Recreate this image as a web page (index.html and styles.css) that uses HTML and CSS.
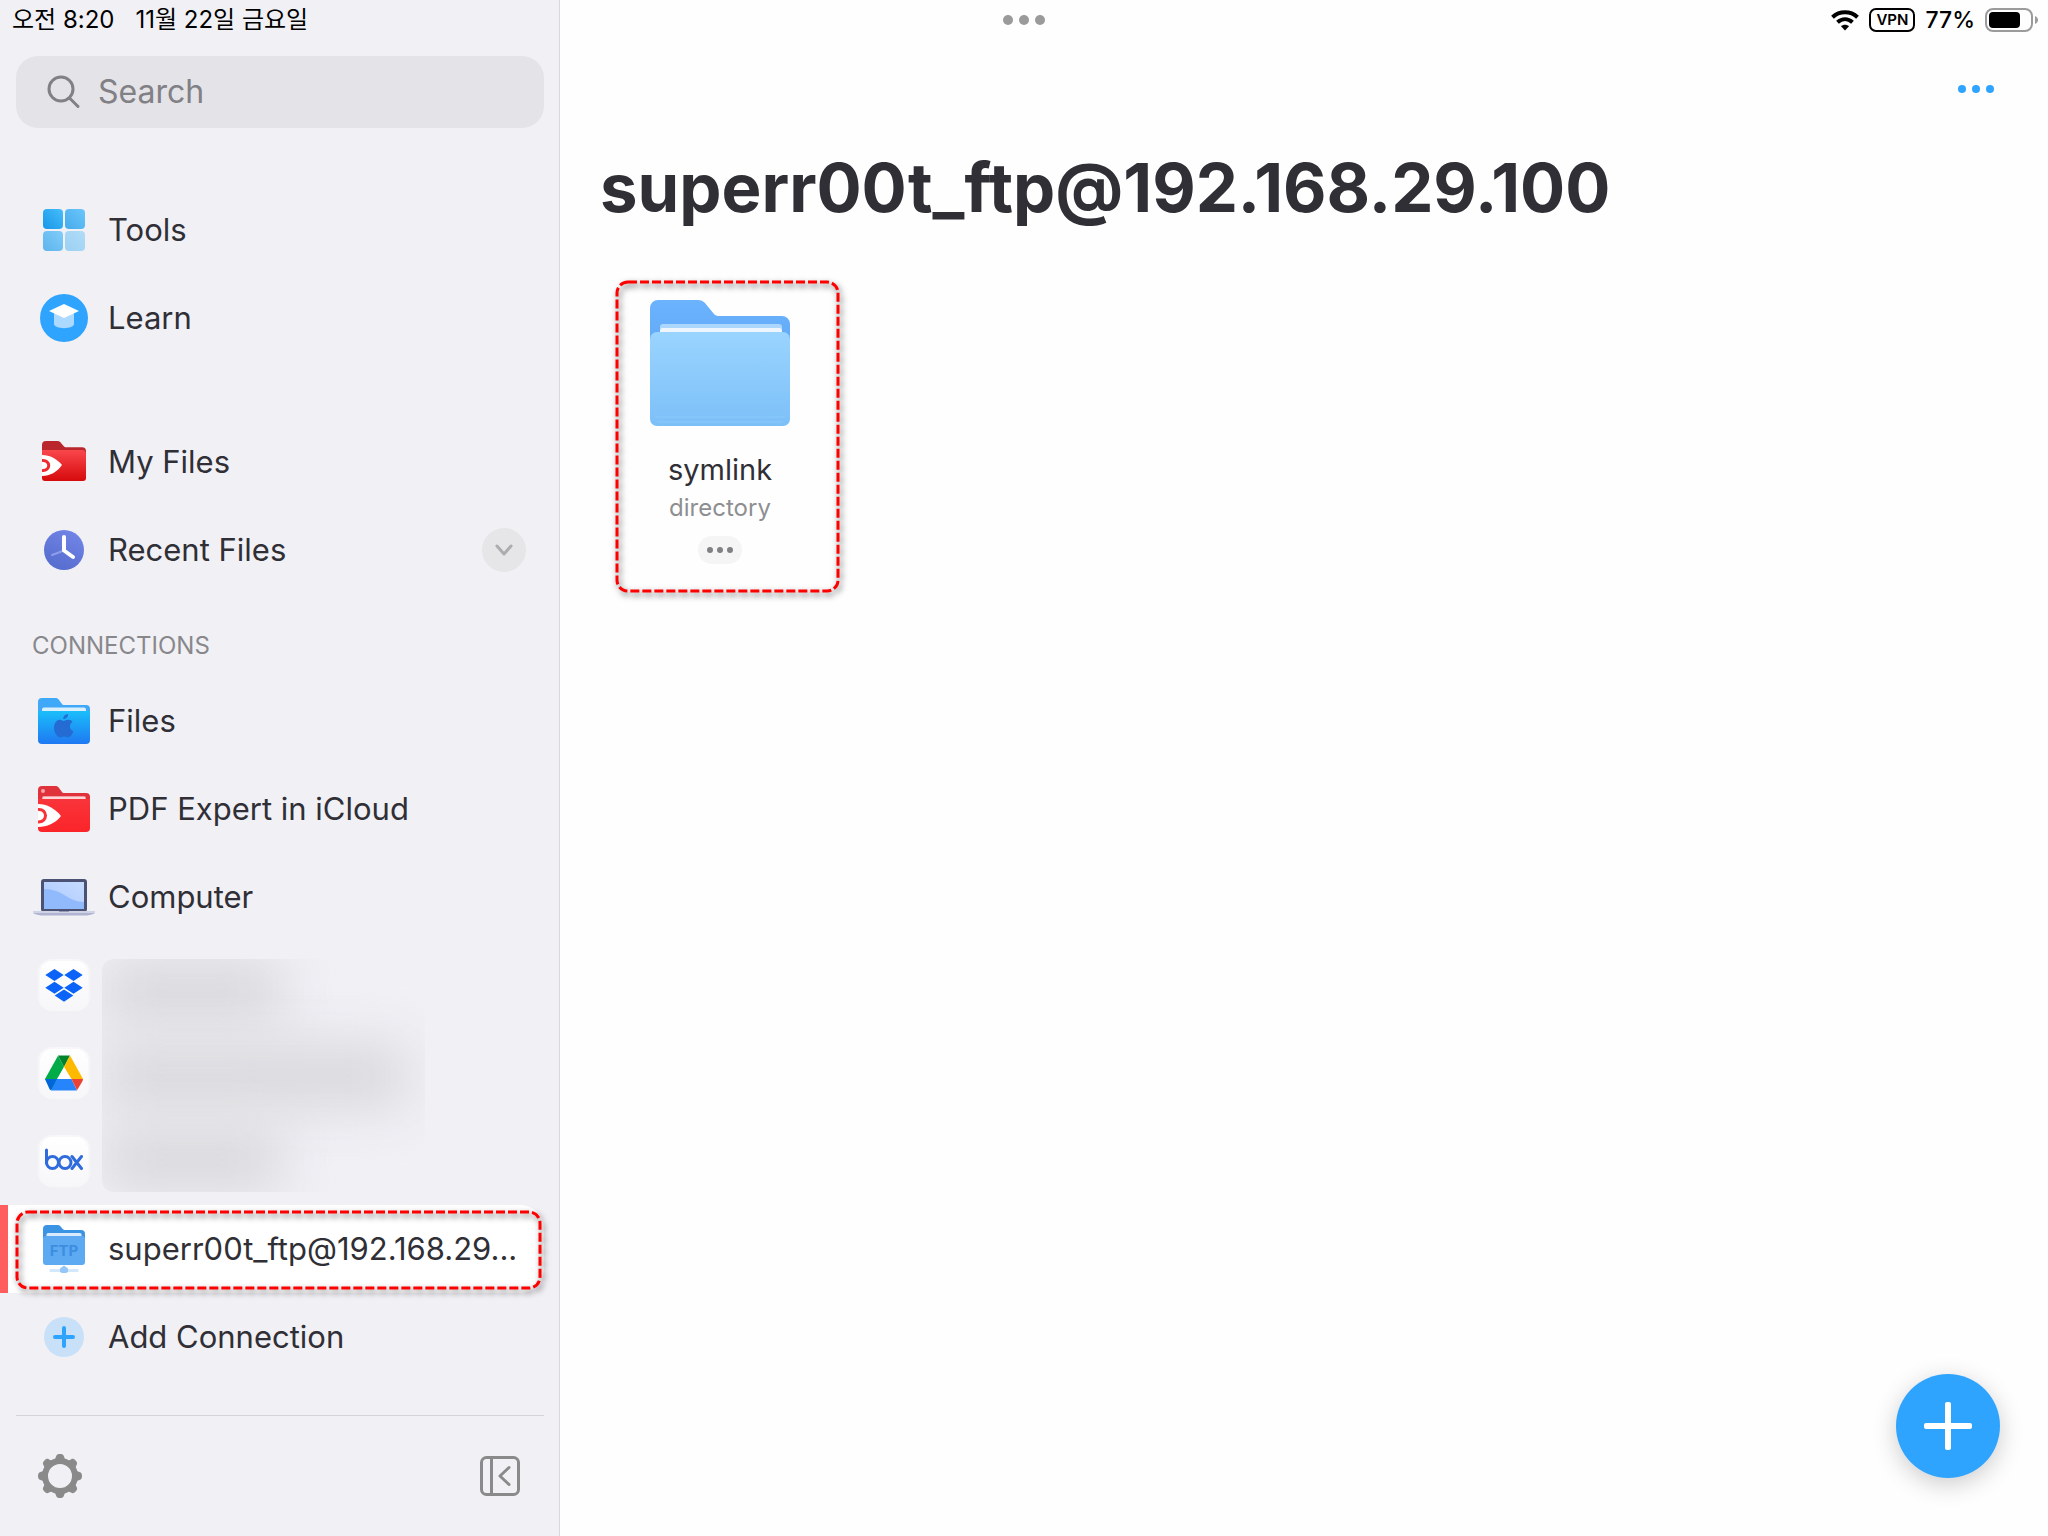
FILE: index.html
```html
<!DOCTYPE html>
<html lang="ko">
<head>
<meta charset="utf-8">
<meta name="viewport" content="width=device-width, initial-scale=1">
<title>superr00t_ftp@192.168.29.100</title>
<link rel="stylesheet" href="styles.css">
</head>
<body>
<div class="app">
  <aside class="sidebar">
    <div class="status status-left"><span>오전 8:20</span><span>11월 22일 금요일</span></div>
    <label class="search">
      <svg width="34" height="34" viewBox="0 0 34 34" fill="none" stroke="#808085" stroke-width="3" stroke-linecap="round"><circle cx="14" cy="14" r="12"/><path d="M22.500 23L31 31.500"/></svg>
      <input type="search" placeholder="Search" aria-label="Search">
    </label>

    <nav class="nav">
      <ul class="group">
        <li><a class="row" href="#tools"><span class="icon">
          <svg width="42" height="42" viewBox="0 0 42 42"><defs><linearGradient id="t1" x1="1" y1="0" x2="0" y2="1"><stop stop-color="#48bdfb"/><stop offset="1" stop-color="#1598e8"/></linearGradient><linearGradient id="t2" x1="1" y1="0" x2="0" y2="1"><stop stop-color="#6cc6fb"/><stop offset="1" stop-color="#45abeb"/></linearGradient><linearGradient id="t3" x1="1" y1="0" x2="0" y2="1"><stop stop-color="#80cdf9"/><stop offset="1" stop-color="#5db4ec"/></linearGradient><linearGradient id="t4" x1="1" y1="0" x2="0" y2="1"><stop stop-color="#b0dcf8"/><stop offset="1" stop-color="#9bd0f2"/></linearGradient></defs>
          <rect width="20" height="20" rx="4" fill="url(#t1)"/><rect x="22" width="20" height="20" rx="4" fill="url(#t2)"/><rect y="22" width="20" height="20" rx="4" fill="url(#t3)"/><rect x="22" y="22" width="20" height="20" rx="4" fill="url(#t4)"/></svg>
        </span><span class="label">Tools</span></a></li>
        <li><a class="row" href="#learn"><span class="icon">
          <svg width="48" height="48" viewBox="0 0 48 48"><circle cx="24" cy="24" r="24" fill="#2fa4ff"/><path d="M14 18v12c0 5.500 20 5.500 20 0V18z" fill="#acd9ff"/><path d="M24 10l15 7-15 7-15-7z" fill="#fff"/></svg>
        </span><span class="label">Learn</span></a></li>
      </ul>

      <ul class="group">
        <li><a class="row" href="#my-files"><span class="icon">
          <svg width="44" height="42" viewBox="0 0 44 42"><defs><linearGradient id="m1" x2="0" y2="1"><stop stop-color="#f9474c"/><stop offset="1" stop-color="#d60a0c"/></linearGradient></defs><path d="M0 12V4a4 4 0 0 1 4-4h11c2 0 3 .5 4 2l3 3.500c.5.5 1 .7 2 .7h16a4 4 0 0 1 4 4V14z" fill="#b9262b"/><path d="M0 9h40a4 4 0 0 1 4 4v24a3 3 0 0 1-3 3H3a3 3 0 0 1-3-3z" fill="url(#m1)"/><path d="M0 14c8 0 15 4 20 10-5 7-12 11-20 11z" fill="#fff"/><path d="M0 19.500c9-1 9 11 0 10" fill="none" stroke="#ee2a2e" stroke-width="3"/></svg>
        </span><span class="label">My Files</span></a></li>
        <li class="row-line"><a class="row" href="#recent"><span class="icon">
          <svg width="40" height="40" viewBox="0 0 40 40"><defs><linearGradient id="c1" x1="1" y1="0" x2=".5" y2="1"><stop stop-color="#7488e8"/><stop offset="1" stop-color="#586ed0"/></linearGradient></defs><circle cx="20" cy="20" r="20" fill="url(#c1)"/><path d="M20 20.500L8 25" stroke="#8d9de8" stroke-width="2" stroke-linecap="round"/><path d="M20 7v13.500l9 6.500" fill="none" stroke="#fff" stroke-width="4" stroke-linecap="round" stroke-linejoin="round"/></svg>
        </span><span class="label">Recent Files</span></a>
        <button class="expand" type="button" aria-label="Expand recent files"><svg width="18" height="12" viewBox="0 0 18 12" fill="none" stroke="#adadb0" stroke-width="3" stroke-linecap="round" stroke-linejoin="round"><path d="M2 2l7 8 7-8"/></svg></button></li>
      </ul>

      <h2 class="heading">CONNECTIONS</h2>
      <ul class="group">
        <li><a class="row" href="#files"><span class="icon">
          <svg width="52" height="46" viewBox="0 1 52 46"><defs><linearGradient id="f1" x2="0" y2="1"><stop stop-color="#1abefa"/><stop offset="1" stop-color="#1f78f2"/></linearGradient></defs><path d="M0 16V5a4 4 0 0 1 4-4h13c2 0 3 .5 4 2l3 4c.5.700 1 1 2 1h22a4 4 0 0 1 4 4v7z" fill="#3fa8f8"/><path d="M4 15v-2.500a2 2 0 0 1 2-2h40a2 2 0 0 1 2 2V15z" fill="#d9effd"/><path d="M0 14h52v29a4 4 0 0 1-4 4H4a4 4 0 0 1-4-4z" fill="url(#f1)"/><path transform="translate(16 17)" d="M9.500 7c1.500 0 2.500-1.200 5-1.200 1.700 0 3.100.8 4 2.200-4 2.600-3 7.600.8 9.200-.9 2.900-3 6.200-5.200 6.200-1.500 0-2.200-.9-4-.9s-2.600.9-4 .9C3.200 23.400 0 18.400 0 14 0 9 2.800 5.800 6 5.800c1.500 0 2.300 1.200 3.500 1.200zM9.300 5C9 2.400 11.500.2 14 0c.3 2.700-1.900 5-4.700 5z" fill="#246bd4"/></svg>
        </span><span class="label">Files</span></a></li>
        <li><a class="row" href="#icloud"><span class="icon">
          <svg width="52" height="46" viewBox="0 1 52 46"><defs><linearGradient id="p1" x2="0" y2="1"><stop stop-color="#f8343a"/><stop offset="1" stop-color="#fb2529"/></linearGradient></defs><path d="M0 16V5a4 4 0 0 1 4-4h13c2 0 3 .5 4 2l3 4c.5.700 1 1 2 1h22a4 4 0 0 1 4 4v7z" fill="#e0323a"/><path d="M4 15v-2a2 2 0 0 1 2-2h40a2 2 0 0 1 2 2v2z" fill="#f69a9d"/><path d="M5 12h42v3H5z" fill="#fff" fill-opacity=".6"/><circle cx="5" cy="6" r="2" fill="#f9a4a8"/><path d="M0 14h52v29a4 4 0 0 1-4 4H4a4 4 0 0 1-4-4z" fill="url(#p1)"/><path d="M0 19c9 0 17 4.500 23 12-6 7.500-14 11-23 11z" fill="#fff"/><path d="M0 24.500c10-1 10 13 0 12.500" fill="none" stroke="#f83237" stroke-width="3"/></svg>
        </span><span class="label">PDF Expert in iCloud</span></a></li>
        <li><a class="row" href="#computer"><span class="icon">
          <svg width="62" height="38" viewBox="0 0 62 38"><defs><linearGradient id="l1" x1="1" y1="0" x2="0" y2="1"><stop stop-color="#c7dbff"/><stop offset="1" stop-color="#a9c8ff"/></linearGradient></defs><rect x="8" y="1" width="46" height="33" rx="3" fill="#4b5274"/><rect x="11" y="4" width="40" height="27" fill="url(#l1)"/><path d="M11 11c19 0 24 13 40 13v7H11z" fill="#91bafd"/><path d="M0 33h62v2c-4 2-7 2-11 2H11c-4 0-7 0-11-2z" fill="#d0d3e6"/><path d="M0 35c4 2 7 2.500 11 2.500h40c4 0 7-.5 11-2.500z" fill="#b0b4d0"/><path d="M26 33h10v1H26z" fill="#9599b8"/></svg>
        </span><span class="label">Computer</span></a></li>
        <li class="masked">
          <ul class="group">
            <li><a class="row" href="#dropbox" aria-label="Dropbox"><span class="icon tile">
              <svg width="38" height="34" viewBox="0 0 38 34" fill="#0b63f8"><path d="M9.500 1l9.200 6-9.200 6L.3 7zM28.500 1l9.200 6-9.200 6-9.200-6zM9.500 13.700l9.200 6-9.200 6-9.200-6zM28.500 13.700l9.200 6-9.200 6-9.200-6zM19 21.500l9.300 6L19 33.700l-9.300-6.200z"/></svg>
            </span></a></li>
            <li><a class="row" href="#drive" aria-label="Google Drive"><span class="icon tile">
              <svg width="38" height="36" viewBox="0 0 38 36"><path d="M13 .8L19 12 7 35.500 0 24z" fill="#00ac47"/><path d="M13 .5h12L19 12z" fill="#00832d"/><path d="M25 .5L38 24H26.500L19 12z" fill="#ffba00"/><path d="M0 24h12L6 35.300C5 35 4.500 34 4 33z" fill="#0066da"/><path d="M12 24h14.500L32 35.500H6z" fill="#2684fc"/><path d="M26.500 24H38c0 1-.5 2-1 3l-5 8.300z" fill="#ea4335"/><path d="M19 12l7 12H12z" fill="#fff"/></svg>
            </span></a></li>
            <li><a class="row" href="#box" aria-label="Box"><span class="icon tile">
              <svg width="38" height="26" viewBox="0 1 38 26" fill="none" stroke="#2f6bdc" stroke-width="3" stroke-linecap="round"><path d="M1.500 3v13"/><circle cx="7.500" cy="15.500" r="6"/><circle cx="20" cy="15.500" r="6"/><path d="M27 9.500l9.500 12M36.500 9.500l-9.500 12"/></svg>
            </span></a></li>
          </ul>
          <div class="mask" aria-hidden="true"><span class="smudge short"></span><span class="smudge"></span><span class="smudge short"></span></div>
        </li>
        <li class="selected"><a class="row" href="#ftp" aria-current="page"><span class="icon">
          <svg width="42" height="48" viewBox="0 0 42 48"><path d="M0 16V4a4 4 0 0 1 4-4h10c2 0 3 .5 4 2l2 2.300c.5.500 1 .7 2 .7h16a4 4 0 0 1 4 4v7z" fill="#3b93e4"/><path d="M3.500 13v-3.500a1.500 1.500 0 0 1 1.500-1.500h32a1.500 1.500 0 0 1 1.500 1.500V13z" fill="#d8eafb"/><path d="M0 14a3 3 0 0 1 3-3h36a3 3 0 0 1 3 3v23a3 3 0 0 1-3 3H3a3 3 0 0 1-3-3z" fill="#5eaaf2"/><path d="M6.500 44h29v3h-29z" fill="#d4e8fc"/><path d="M17 43.500l4-3 4 3v3.500l-2 1h-4l-2-1z" fill="#94c6fa"/><text x="21" y="31" text-anchor="middle" class="ftp-text">FTP</text></svg>
        </span><span class="label">superr00t_ftp@192.168.29...</span></a>
        <svg class="marker" aria-hidden="true"><rect class="marker-line"/></svg></li>
        <li><a class="row" href="#add"><span class="icon">
          <svg width="40" height="40" viewBox="0 0 40 40"><circle cx="20" cy="20" r="20" fill="#c8e1f8"/><path d="M20 11v18M11 20h18" stroke="#2fa4ff" stroke-width="4" stroke-linecap="round"/></svg>
        </span><span class="label">Add Connection</span></a></li>
      </ul>
    </nav>

    <div class="footer">
      <button type="button" aria-label="Settings"><svg width="44" height="44" viewBox="0 0 44 44"><g fill="#8a8a8a"><path id="tooth" d="M14 7c2-.5 3.500-2 4-4.500C18.500.5 20 0 22 0s3.500.5 4 2.500C26.500 5 28 6.500 30 7z"/><use href="#tooth" transform="rotate(45 22 22)"/><use href="#tooth" transform="rotate(90 22 22)"/><use href="#tooth" transform="rotate(135 22 22)"/><use href="#tooth" transform="rotate(180 22 22)"/><use href="#tooth" transform="rotate(225 22 22)"/><use href="#tooth" transform="rotate(270 22 22)"/><use href="#tooth" transform="rotate(315 22 22)"/></g><circle cx="22" cy="22" r="15" fill="none" stroke="#8a8a8a" stroke-width="6"/></svg></button>
      <button type="button" aria-label="Hide sidebar"><svg width="40" height="40" viewBox="0 0 40 40" fill="none" stroke="#8a8a8a" stroke-width="3"><rect x="1.500" y="1.500" width="37" height="37" rx="5"/><path d="M11.500 2v36"/><path d="M29 11.500L20 20l9 8.500" stroke-linecap="round" stroke-linejoin="round"/></svg></button>
    </div>
  </aside>

  <main class="main">
    <div class="status status-right">
      <svg width="28" height="21" viewBox="0 0 28 21"><path d="M14 20.500l-4-4.200c2.200-2 5.800-2 8 0z"/><path d="M6.500 12.300c4.500-4 10.500-4 15 0" fill="none" stroke="#000" stroke-width="4"/><path d="M1.500 7.300c7-6.600 18-6.600 25 0" fill="none" stroke="#000" stroke-width="4"/></svg>
      <span class="vpn">VPN</span>
      <span>77%</span>
      <svg width="54" height="24" viewBox="0 0 54 24"><rect x="1" y="1" width="46" height="22" rx="7" fill="none" stroke="#9b9b9b" stroke-width="2"/><rect x="4" y="4" width="31" height="16" rx="4"/><path d="M50 8c4 1.500 4 6.500 0 8z" fill="#9b9b9b"/></svg>
    </div>
    <div class="toolbar"><button type="button" aria-label="More"><svg width="36" height="8" viewBox="0 0 36 8" fill="#2fa4ff"><circle cx="4" cy="4" r="4"/><circle cx="18" cy="4" r="4"/><circle cx="32" cy="4" r="4"/></svg></button></div>
    <h1 class="title">superr00t_ftp@192.168.29.100</h1>
    <div class="items">
      <article class="item">
        <svg width="140" height="126" viewBox="0 0 140 126"><defs><linearGradient id="b1" x2="0" y2="1"><stop stop-color="#9ad4ff"/><stop offset="1" stop-color="#7cc0f8"/></linearGradient><linearGradient id="b2" x2="0" y2="1"><stop stop-color="#6cb3fe"/><stop offset="1" stop-color="#61a9f5"/></linearGradient></defs><path d="M0 50V8a8 8 0 0 1 8-8h40c3 0 5 1 7 3l9 11c1.500 1.500 3 2 5 2h63a8 8 0 0 1 8 8v26z" fill="url(#b2)"/><path d="M10 36v-9a3 3 0 0 1 3-3h116a3 3 0 0 1 3 3v9z" fill="#add6fc"/><path d="M10 36v-5a3 3 0 0 1 3-3h116a3 3 0 0 1 3 3v5z" fill="#eef5fd"/><rect y="32" width="140" height="94" rx="7" fill="url(#b1)"/><path d="M5 117h130M7 122h126" stroke="#8bcafb" stroke-width="1"/></svg>
        <h2 class="name">symlink</h2>
        <p class="kind">directory</p>
        <button class="item-more" type="button" aria-label="Item options"><svg width="26" height="6" viewBox="0 0 26 6" fill="#808085"><circle cx="3" cy="3" r="3"/><circle cx="13" cy="3" r="3"/><circle cx="23" cy="3" r="3"/></svg></button>
        <svg class="marker" aria-hidden="true"><rect class="marker-line"/></svg>
      </article>
    </div>
    <button class="fab" type="button" aria-label="Add"><svg width="48" height="48" viewBox="0 0 48 48" fill="#fff"><rect x="21" width="6" height="48" rx="2"/><rect y="21" width="48" height="6" rx="2"/></svg></button>
  </main>
  <div class="multitask" aria-hidden="true"><span></span><span></span><span></span></div>
</div>
</body>
</html>
```
FILE: styles.css
```css
* { box-sizing: border-box; }

body {
  margin: 0;
  font-family: Inter, "Noto Sans CJK KR", sans-serif;
  color: #2f2f35;
  background: #fefefe;
}

h1, h2, p, ul { margin: 0; padding: 0; }
ul { list-style: none; }
a { color: inherit; text-decoration: none; }
button {
  display: flex;
  align-items: center;
  justify-content: center;
  padding: 0;
  border: 0;
  background: none;
}
svg { display: block; flex: none; }

.app {
  position: relative;
  display: grid;
  grid-template-columns: 560px 1fr;
  min-height: 100vh;
}

.status {
  display: flex;
  align-items: center;
  height: 40px;
  font-size: 23px;
  font-weight: 500;
  line-height: 40px;
  color: #000;
}
.status-left { gap: 21px; padding-left: 12px; font-size: 24px; font-weight: 400; }
.status-right { justify-content: flex-end; gap: 10px; padding-right: 9px; }

.vpn {
  height: 24px;
  padding: 0 5px;
  border: 2px solid #000;
  border-radius: 7px;
  font-size: 15px;
  font-weight: 600;
  line-height: 20px;
}

.multitask {
  position: absolute;
  top: 15px;
  left: 50%;
  display: flex;
  gap: 6px;
  transform: translateX(-50%);
}
.multitask span {
  width: 10px;
  height: 10px;
  border-radius: 50%;
  background: #9a9a9a;
}

/* Sidebar */
.sidebar {
  display: flex;
  flex-direction: column;
  border-right: 1px solid #d8d8dc;
  background: #f1f0f5;
}

.search {
  display: flex;
  align-items: center;
  gap: 17px;
  height: 72px;
  margin: 16px 15px 0 16px;
  padding: 0 31px 1px;
  border-radius: 22px;
  background: #e4e3e8;
}
.search input {
  flex: 1;
  min-width: 0;
  padding: 0;
  border: 0;
  outline: 0;
  background: none;
  font: inherit;
  font-size: 32px;
}
.search input::placeholder { color: #808085; opacity: 1; }

.nav { padding-top: 58px; }
.nav > .group + .group { margin-top: 56px; }

.row {
  display: flex;
  flex: 1;
  align-items: center;
  gap: 13px;
  min-width: 0;
  height: 88px;
  padding-left: 33px;
}
.icon { display: flex; flex: none; justify-content: center; width: 62px; }
.label {
  overflow: hidden;
  font-size: 31px;
  line-height: 40px;
  white-space: nowrap;
}
.row-line { display: flex; align-items: center; padding-right: 33px; }

.expand {
  width: 44px;
  height: 44px;
  border-radius: 50%;
  background: #e6e6e8;
}

.heading {
  padding: 36px 32px 15px;
  font-size: 24px;
  font-weight: 400;
  line-height: 32px;
  color: #88888c;
}

.tile {
  align-items: center;
  width: 52px;
  height: 52px;
  margin: 0 5px;
  border: 2px solid #f7f7fa;
  border-radius: 14px;
  background: linear-gradient(#fff, #f7f7fa);
}

.masked { position: relative; }
.mask {
  position: absolute;
  top: 18px;
  left: 102px;
  display: flex;
  flex-direction: column;
  justify-content: space-between;
  width: 323px;
  height: 233px;
  overflow: hidden;
  border-radius: 12px;
}
.smudge {
  width: 305px;
  height: 64px;
  background: #d9d9dd;
  filter: blur(26px);
}
.smudge.short { width: 180px; }

.selected {
  position: relative;
  margin-right: 15px;
  border-left: 8px solid #ff5e5e;
  border-radius: 0 24px 24px 0;
  background: #fff;
}
.selected .row { padding-left: 25px; }
.selected .marker { inset: 5px 2px 3px 7px; width: calc(100% - 9px); height: 80px; }

.ftp-text { font-size: 15px; font-weight: 700; fill: #3b8ee0; }

/* Dashed highlight drawn over a row or a tile */
.marker {
  position: absolute;
  inset: 0;
  width: 100%;
  height: 100%;
  overflow: visible;
  pointer-events: none;
  filter: drop-shadow(2px 3px 3px rgba(0, 0, 0, .6));
}
.marker-line {
  x: 2px;
  y: 2px;
  width: calc(100% - 4px);
  height: calc(100% - 4px);
  rx: 11px;
  fill: none;
  stroke: #f00;
  stroke-width: 3px;
  stroke-dasharray: 9 3;
}

.footer {
  display: flex;
  align-items: center;
  justify-content: space-between;
  height: 121px;
  margin: auto 15px 0 16px;
  padding: 0 24px 0 22px;
  border-top: 1px solid #d6d6da;
}

/* Content */
.toolbar {
  display: flex;
  align-items: center;
  justify-content: flex-end;
  height: 98px;
  padding-right: 54px;
}
.title {
  padding-left: 40px;
  font-size: 67px;
  font-weight: 700;
  line-height: 100px;
}
.items { display: flex; flex-wrap: wrap; padding: 42px 55px; }
.item {
  position: relative;
  display: flex;
  flex-direction: column;
  align-items: center;
  width: 225px;
  height: 313px;
  padding: 20px 15px 0 0;
}
.name {
  margin-top: 24px;
  font-size: 29px;
  font-weight: 400;
  line-height: 40px;
}
.kind {
  margin-top: 2px;
  font-size: 24px;
  line-height: 32px;
  color: #8e8e92;
}
.item-more {
  width: 44px;
  height: 28px;
  margin-top: 12px;
  border-radius: 14px;
  background: #f5f5f6;
}

.fab {
  position: fixed;
  right: 48px;
  bottom: 58px;
  width: 104px;
  height: 104px;
  border-radius: 50%;
  background: #2fa4ff;
  box-shadow: 0 6px 24px rgba(0, 0, 0, .2);
}
```
